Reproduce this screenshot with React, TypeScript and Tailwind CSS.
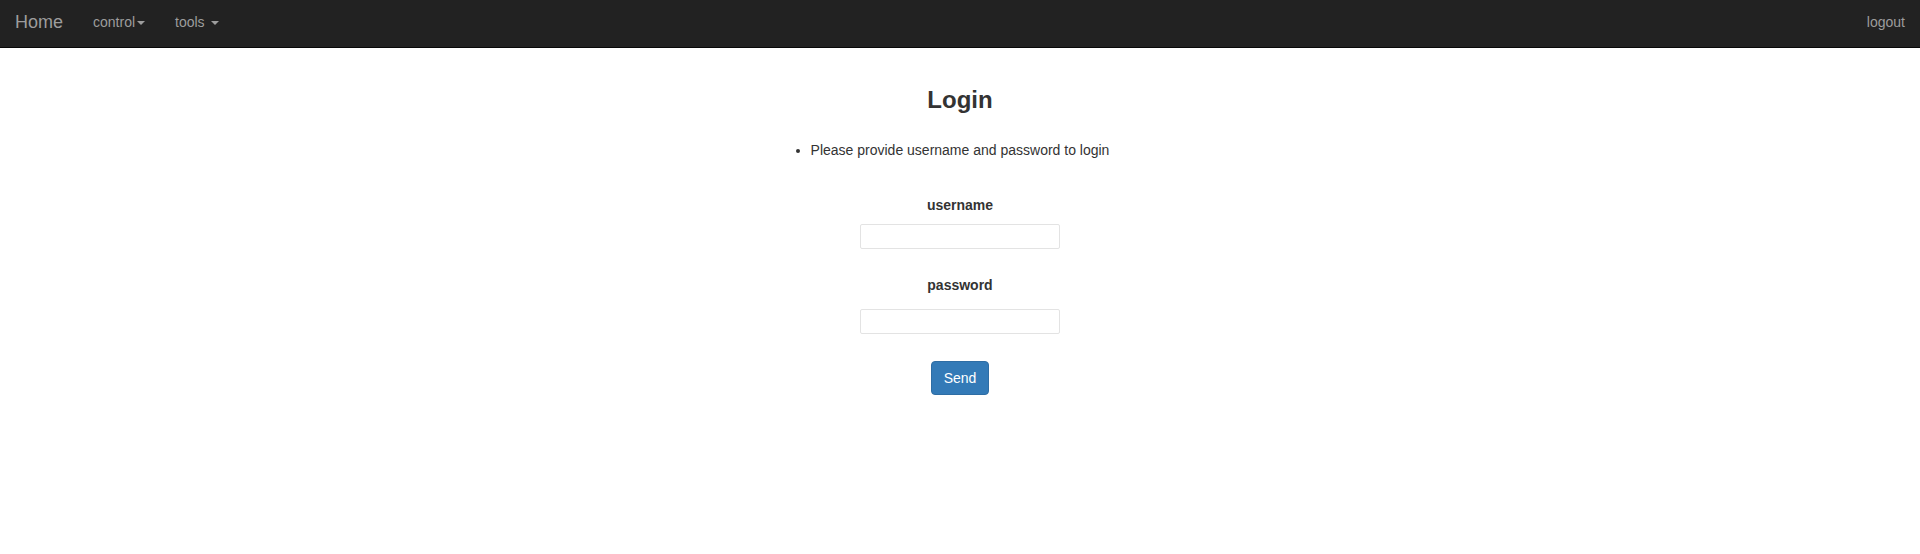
import React from "react";

const navLinks = [
  { label: "control", spaced: false },
  { label: "tools", spaced: true },
];

function Caret() {
  return (
    <span className="ml-[2px] inline-block h-0 w-0 border-x-[4px] border-t-[4px] border-x-transparent border-t-[#9d9d9d] align-middle" />
  );
}

export default function App() {
  return (
    <div className="min-h-[554px] bg-white font-['Liberation_Sans',Arial,sans-serif] text-[14px] text-[#333]">
      <nav className="flex h-[48px] items-start justify-between border-b border-[#080808] bg-[#222]">
        <div className="flex items-start">
          <a className="px-[15px] pt-[12px] text-[18px] leading-[20px] text-[#9d9d9d]">Home</a>
          {navLinks.map((link) => (
            <a key={link.label} className="px-[15px] pt-[12px] leading-[20px] text-[#9d9d9d]">
              {link.label}
              {link.spaced ? " " : ""}
              <Caret />
            </a>
          ))}
        </div>
        <a className="px-[15px] pt-[12px] leading-[20px] text-[#9d9d9d]">logout</a>
      </nav>

      <main className="flex flex-col items-center">
        <h3 className="mt-[39px] text-[24px] font-bold leading-[26px]">Login</h3>
        <ul className="mt-[27px] list-disc pl-0 text-center leading-[20px]">
          <li>Please provide username and password to login</li>
        </ul>

        <form className="flex flex-col items-center" onSubmit={(e) => e.preventDefault()}>
          <label className="mt-[35px] font-bold leading-[20px]">username</label>
          <input
            type="text"
            className="mt-[9px] h-[25px] w-[200px] rounded-[2px] border border-[#e3e3e3] px-2 outline-none"
          />
          <label className="mt-[26px] font-bold leading-[20px]">password</label>
          <input
            type="password"
            className="mt-[14px] h-[25px] w-[200px] rounded-[2px] border border-[#e3e3e3] px-2 outline-none"
          />
          <button
            type="submit"
            className="mt-[27px] h-[34px] rounded-[4px] border border-[#2e6da4] bg-[#337ab7] px-[12px] leading-[20px] text-white"
          >
            Send
          </button>
        </form>
      </main>
    </div>
  );
}
